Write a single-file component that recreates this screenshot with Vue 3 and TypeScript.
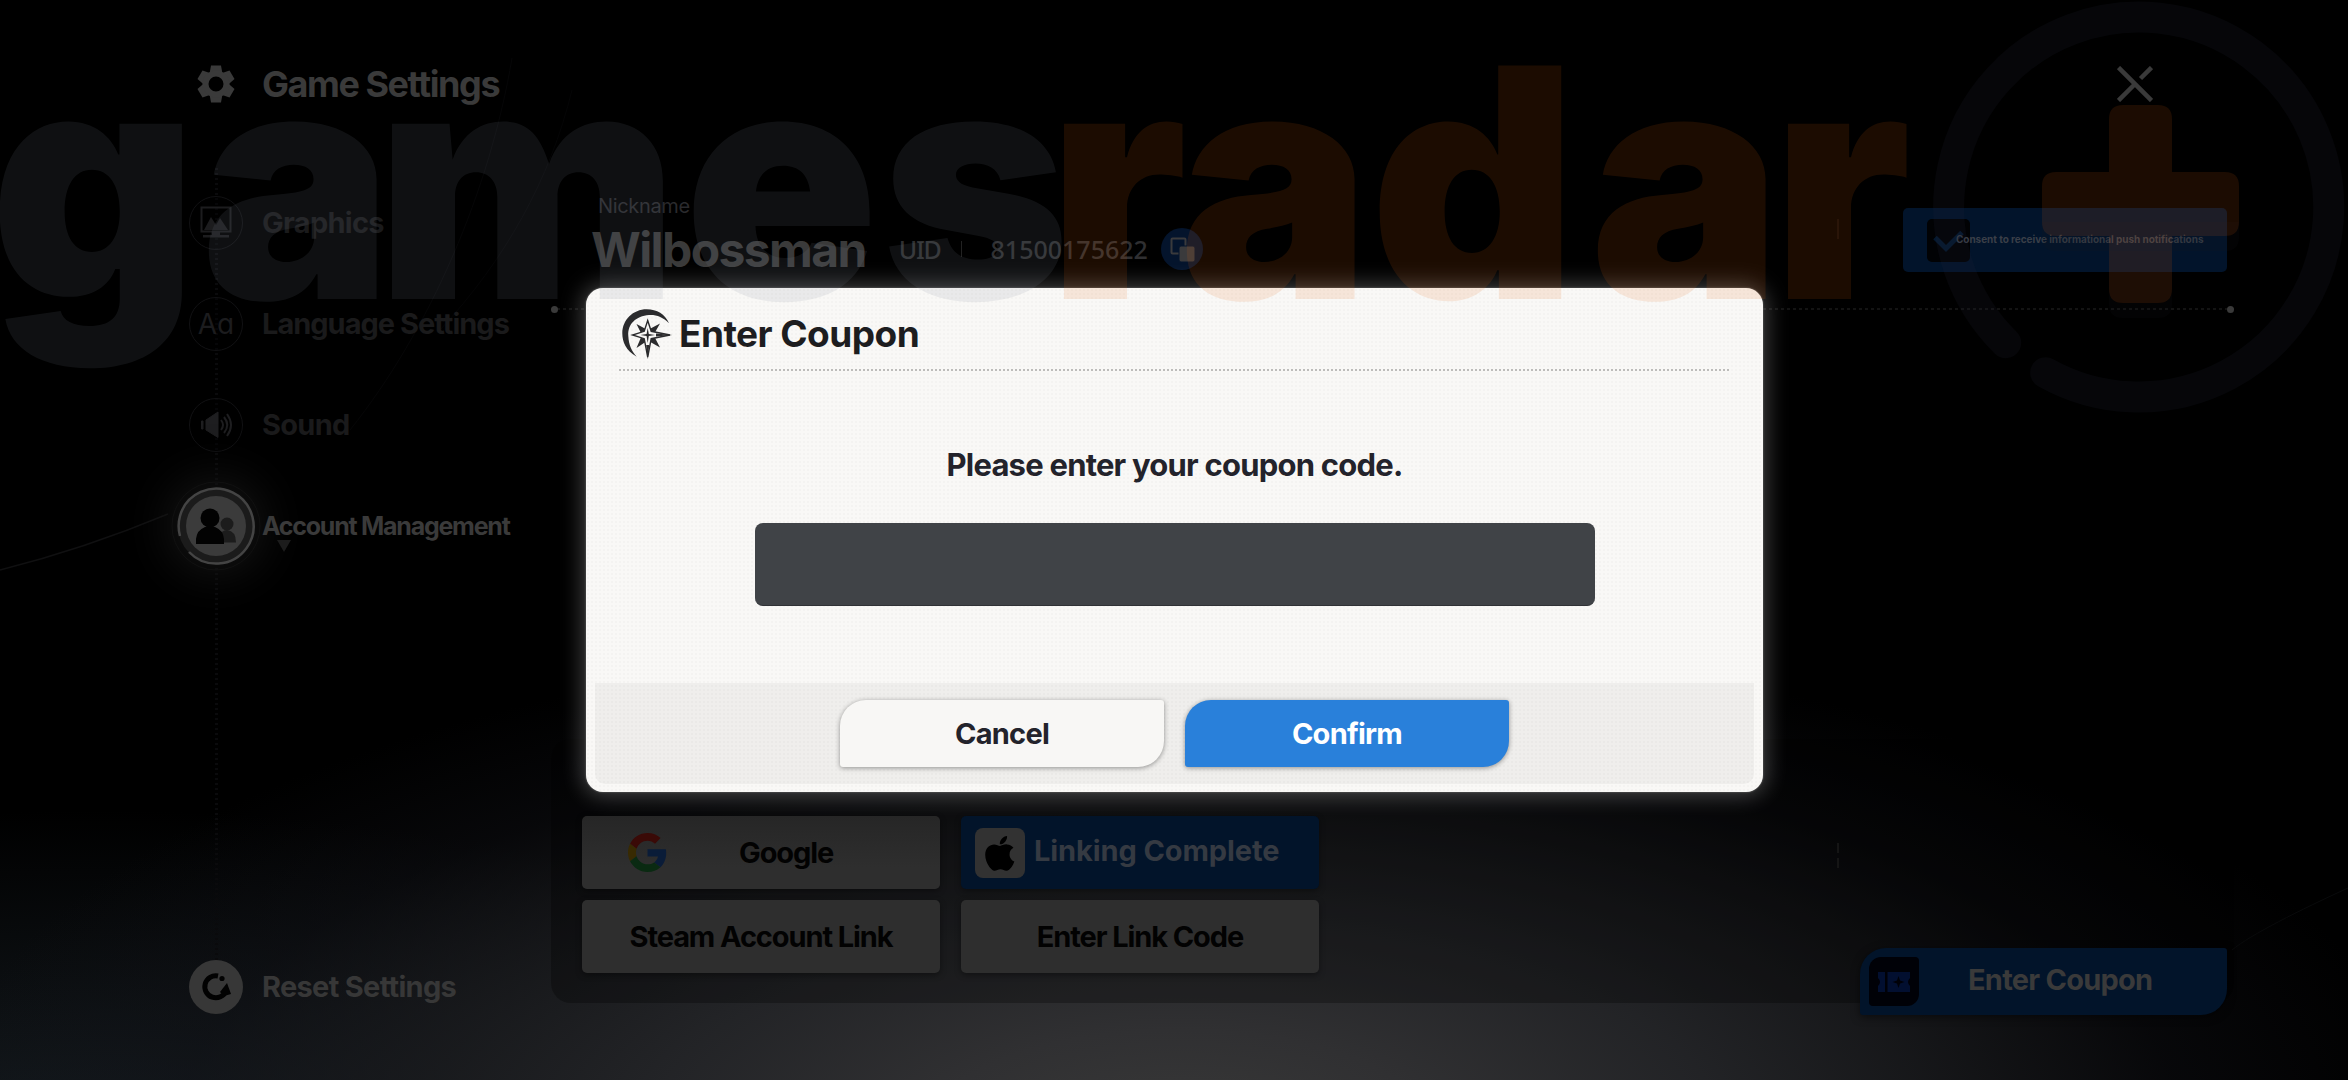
<template>
  <div class="screen">
    <svg class="trails" viewBox="0 0 2348 1080" fill="none">
      <path d="M0 570C60 555 120 534 168 514" stroke="#101011" stroke-width="1.5" />
      <path d="M512 58C490 190 430 330 350 430" stroke="#060607" />
      <path d="M572 90C550 180 505 260 440 330" stroke="#050506" />
      <path d="M2348 888C2300 910 2250 935 2232 950" stroke="#090a0b" />
    </svg>

    <aside class="sidebar">
      <div class="side-row title-row">
        <svg class="side-icon" viewBox="-27 -27 54 54">
          <g fill="#3a3a3a">
            <path v-for="a in 6" :key="a" d="M-5-18.5H5L6.500-10H-6.500Z" :transform="`rotate(${a * 60})`" />
          </g>
          <circle r="10.500" fill="none" stroke="#3a3a3a" stroke-width="6" />
        </svg>
        <h1 class="t-title">Game Settings</h1>
      </div>

      <nav class="side-nav">
        <div v-for="item in navItems" :key="item.id" class="side-row" :class="{ active: item.id === current }">
          <svg class="side-icon" viewBox="-27 -27 54 54">
            <circle v-if="item.id !== current" r="26.500" fill="#000" fill-opacity=".3" stroke="#111113" />
            <g v-if="item.id === 'graphics'">
              <rect x="-14.500" y="-15.500" width="29" height="24" fill="none" stroke="#1c1c1e" stroke-width="2" />
              <path d="M-12 7L-5-6L0 2L4-5L12 7Z" fill="#1c1c1e" />
              <path d="M-4 9H4V12H13V14.500H-13V12H-4Z" fill="#1c1c1e" />
            </g>
            <text v-else-if="item.id === 'language'" class="aa" x="0" y="10" text-anchor="middle">Aa</text>
            <g v-else-if="item.id === 'sound'" fill="none" stroke="#1e1e20" stroke-width="2">
              <path d="M-14.500-4H-13V4H-14.500ZM-10-5L2-13V12.500L-10 5Z" fill="#1e1e20" stroke-width="1" />
              <path d="M5-5Q9 0 5 5M8-8Q14.500 0 8 8M11-11Q19 0 11 11" />
            </g>
            <g v-else>
              <circle r="44" fill="none" stroke="#111" />
              <circle r="38" fill="#1b1b1b" />
              <circle r="30" fill="#3b3b3b" />
              <path d="M-27 26A37.500 37.500 0 1 0-36-10A37.500 37.500 0 0 0-36 10" fill="none" stroke="#444" stroke-width="2.500" />
              <g fill="#1c1c1c">
                <circle cx="11" cy="-2" r="6.500" />
                <path d="M4 16.500V11Q5 4 11 4Q20 5 20 16.500Z" />
              </g>
              <g fill="#020202">
                <circle cx="-6" cy="-8" r="9.500" />
                <path d="M-20 18V13Q-19 4-11 1H-1Q7 4 8 13V18Z" />
              </g>
            </g>
          </svg>
          <span class="t-nav" :class="'t-' + item.id">{{ item.label }}</span>
        </div>
      </nav>

      <div class="side-row reset-row">
        <svg class="side-icon" viewBox="-27 -27 54 54">
          <circle r="27" fill="#373737" />
          <path d="M2-11A11 11 0 1 0 10 4" fill="none" stroke="#020202" stroke-width="5" />
          <path d="M4 5L11-4L15 7L8 9Z" fill="#020202" />
          <circle cx="6" cy="-8.500" r="2.600" fill="#020202" />
        </svg>
        <span class="t-nav t-reset">Reset Settings</span>
      </div>
    </aside>

    <main class="content">
      <header class="top">
        <svg class="close" viewBox="0 0 36 36" fill="none" stroke="#3a3a3a" stroke-width="4.500">
          <path d="M1.500 1.500L34.500 34.500M1.500 34.500L18 18M23.500 12.500L34.500 1.500" />
        </svg>
      </header>

      <section class="profile">
        <div class="who">
          <div class="nick-label">Nickname</div>
          <div class="nick-row">
            <span class="nick">Wilbossman</span>
            <span class="uid uid-key">UID</span>
            <i class="uid-bar"></i>
            <span class="uid">81500175622</span>
            <svg class="copy" viewBox="0 0 42 42">
              <circle cx="21" cy="21" r="21" fill="#04142c" />
              <rect x="10.500" y="10.500" width="14" height="15" rx="1" fill="none" stroke="#3a3a3c" stroke-width="2" />
              <rect x="18" y="18" width="16" height="16" rx="2" fill="#3a3a3c" stroke="#04142c" />
            </svg>
          </div>
        </div>
        <i class="tick"></i>
        <button class="consent">
          <svg class="check" viewBox="0 0 43 43">
            <rect width="43" height="43" rx="5" fill="#010204" />
            <path d="M8 18.500L19 29.500L35 13.500" fill="none" stroke="#04182f" stroke-width="5" />
          </svg>
          <span class="consent-text">Consent to receive informational push notifications</span>
        </button>
      </section>

      <div class="divider"></div>

      <section class="panel">
        <div class="providers">
          <button v-for="p in providers" :key="p.id" class="provider" :class="p.id">
            <svg v-if="p.id === 'google'" class="g-logo" viewBox="0 0 48 48">
              <path fill="#3a0a07" d="M24 9.500c3.540 0 6.710 1.220 9.210 3.600l6.850-6.850C35.900 2.380 30.470 0 24 0 14.620 0 6.510 5.380 2.560 13.220l7.980 6.190C12.430 13.720 17.740 9.500 24 9.500z" />
              <path fill="#0a1c38" d="M46.980 24.550c0-1.570-.15-3.090-.38-4.550H24v9.020h12.940c-.58 2.960-2.260 5.480-4.780 7.180l7.730 6c4.510-4.180 7.090-10.360 7.090-17.650z" />
              <path fill="#382a02" d="M10.530 28.590c-.48-1.450-.76-2.990-.76-4.590s.27-3.140.76-4.590l-7.980-6.190C.92 16.460 0 20.120 0 24c0 3.880.92 7.540 2.560 10.780l7.970-6.190z" />
              <path fill="#0a2a12" d="M24 48c6.480 0 11.930-2.130 15.890-5.810l-7.730-6c-2.150 1.450-4.920 2.300-8.160 2.300-6.260 0-11.570-4.220-13.470-9.910l-7.980 6.190C6.510 42.620 14.620 48 24 48z" />
            </svg>
            <svg v-if="p.id === 'apple'" class="apple-logo" viewBox="0 0 50 50">
              <rect width="50" height="50" rx="8" fill="#323232" />
              <g transform="translate(9.900 2.500) scale(.086)">
                <path d="M318.700 268.700c-.2-36.700 16.400-64.400 50-84.800-18.800-26.900-47.200-41.700-84.700-44.600-35.500-2.800-74.300 20.700-88.500 20.700-15 0-49.400-19.700-76.400-19.700C63.300 141.200 4 184.800 4 273.500q0 39.300 14.400 81.200c12.800 36.700 59 126.700 107.200 125.200 25.200-.6 43-17.900 75.800-17.900 31.800 0 48.300 17.900 76.400 17.900 48.600-.7 90.400-82.500 102.600-119.300-65.200-30.700-61.700-90-61.700-91.900zm-56.600-164.200c27.300-32.400 24.800-61.900 24-72.500-24.100 1.400-52 16.400-67.900 34.900-17.500 19.800-27.800 44.300-25.600 71.900 26.100 2 49.900-11.400 69.500-34.300z" transform="translate(0 36) scale(.9)" />
              </g>
            </svg>
            <span>{{ p.label }}</span>
          </button>
        </div>
        <div class="ticks"><i></i><i></i></div>
        <button class="coupon">
          <span class="ticket">
            <svg viewBox="0 0 32 22">
              <path d="M0 1H7V21H0V15Q4 11 0 7ZM9.500 1H32V7Q28 11 32 15V21H9.500Z" fill="#020f30" />
              <path d="M20.500 5L22 9.500L26.500 11L22 12.500L20.500 17L19 12.500L14.500 11L19 9.500Z" fill="#000107" />
            </svg>
          </span>
          <span class="coupon-label">Enter Coupon</span>
        </button>
      </section>
    </main>

    <div class="modal">
      <header class="modal-head">
        <svg class="emblem" viewBox="0 0 51 51">
          <path fill="#2b2b2d" d="M14.700 47.700C4 42 .3 33 .3 24.300C.3 11 11 .3 24.700 .3C35 .3 43 5 47 14.300C41 8 34 5.500 27 6C14 7 5.500 15 6.300 27C6.800 36 9.500 42 14.700 47.700Z" />
          <path fill="#2b2b2d" d="M14.500 15L25.700 21L38 14.500L31.500 26L38 38.500L25.700 31.500L14.500 39L20 26Z" />
          <path fill="#f8f7f5" stroke="#2b2b2d" stroke-width="1.400" d="M25.700 11.500L29.200 22.300L48 26L29.200 29.700L25.700 48L22.200 29.700L10.500 26L22.200 22.300Z" />
          <path fill="#2b2b2d" d="M25.700 19L26.800 24.900L33 26L26.800 27.100L25.700 34L24.600 27.100L18.500 26L24.600 24.900ZM34 24.500L50.500 26L34 27.500ZM24.200 36L25.700 50.500L27.200 36Z" />
        </svg>
        <h2 class="modal-title">Enter Coupon</h2>
      </header>
      <div class="modal-body">
        <p class="prompt">Please enter your coupon code.</p>
        <input v-model="couponCode" class="code-input" type="text" />
      </div>
      <footer class="modal-foot">
        <button class="btn cancel">Cancel</button>
        <button class="btn confirm">Confirm</button>
      </footer>
    </div>

    <svg class="watermark" viewBox="0 0 2348 1080">
      <g class="wm-text">
        <text x="-10 201 376 684 881" y="299" fill="#7d8796">games</text>
        <text x="1048 1179 1370 1590 1772" y="299" fill="#e6640f">radar</text>
      </g>
      <g class="wm-shadow">
        <path d="M2005.700 342.700A190 190 0 1 1 2045.700 372.700" fill="none" stroke="#25283a" stroke-width="31" stroke-linecap="round" />
        <path d="M2109 236H2172V304Q2172 318 2158 318H2123Q2109 318 2109 304ZM2042 222V237Q2042 251 2056 251H2225Q2239 251 2239 237V222Z" fill="#15161c" />
      </g>
      <path class="wm-plus" d="M2123 105H2158Q2172 105 2172 119V172H2225Q2239 172 2239 186V222Q2239 236 2225 236H2172V289Q2172 303 2158 303H2123Q2109 303 2109 289V236H2056Q2042 236 2042 222V186Q2042 172 2056 172H2109V119Q2109 105 2123 105Z" fill="#e6640f" />
    </svg>
  </div>
</template>

<script setup lang="ts">
import { ref } from 'vue';

interface Entry {
  id: string;
  label: string;
}

const navItems: Entry[] = [
  { id: 'graphics', label: 'Graphics' },
  { id: 'language', label: 'Language Settings' },
  { id: 'sound', label: 'Sound' },
  { id: 'account', label: 'Account Management' },
];

const providers: Entry[] = [
  { id: 'google', label: 'Google' },
  { id: 'apple', label: 'Linking Complete' },
  { id: 'steam', label: 'Steam Account Link' },
  { id: 'code', label: 'Enter Link Code' },
];

const current = ref('account');
const couponCode = ref('');
</script>

<style>
body {
  margin: 0;
  background: #000;
}
</style>

<style scoped>
.screen {
  position: relative;
  width: 2348px;
  height: 1080px;
  overflow: hidden;
  display: grid;
  grid-template-columns: 551px 1683px 1fr;
  font-family: Inter, "Liberation Sans", sans-serif;
  background:
    radial-gradient(ellipse 1250px 500px at 1180px 1130px, #383838 0%, rgba(48, 48, 50, 1) 20%, rgba(36, 37, 40, 0.95) 43%, rgba(28, 29, 32, 0.8) 60%, rgba(18, 19, 24, 0.4) 80%, transparent 100%),
    radial-gradient(ellipse 900px 340px at 100px 1150px, #161c21 0%, transparent 100%),
    #000;
}

.trails,
.watermark {
  position: absolute;
  inset: 0;
  width: 2348px;
  height: 1080px;
  pointer-events: none;
}

button {
  border: none;
  padding: 0;
  font-family: inherit;
  font-weight: 700;
}

.sidebar {
  position: relative;
  height: 1080px;
  box-sizing: border-box;
  padding: 57px 0 66px 189px;
  display: flex;
  flex-direction: column;
}

.sidebar::before {
  content: "";
  position: absolute;
  left: 215px;
  top: 168px;
  width: 3px;
  height: 792px;
  background: repeating-linear-gradient(#0a0a0c 0 2px, transparent 2px 5px);
}

.side-row {
  position: relative;
  height: 54px;
  display: flex;
  align-items: center;
  gap: 19px;
  white-space: nowrap;
}

.side-icon {
  width: 54px;
  height: 54px;
  overflow: visible;
}

.side-nav {
  margin-top: 85px;
  display: flex;
  flex-direction: column;
  gap: 47px;
}

.active .side-icon {
  border-radius: 50%;
  box-shadow: 0 0 50px 18px #181818;
}

.active::after {
  content: "";
  position: absolute;
  left: 88px;
  top: 41px;
  border: 7px solid transparent;
  border-top: 12px solid #1c1c1c;
  border-bottom: none;
}

.t-title {
  margin: 0;
  font-size: 36px;
  font-weight: 700;
  letter-spacing: -1.45px;
  color: #3a3a3a;
}

.t-nav {
  padding-bottom: 1px;
  font-size: 29px;
  font-weight: 700;
  letter-spacing: -0.7px;
  color: #1a1a1b;
}

.t-language {
  letter-spacing: -1px;
}

.t-account {
  font-size: 25px;
  letter-spacing: -1.25px;
  color: #3a3a3a;
}

.t-reset {
  color: #373737;
}

.aa {
  font-size: 28px;
  font-feature-settings: "cv11";
  fill: #1c1c1e;
}

.reset-row {
  margin-top: auto;
}

.content {
  height: 1080px;
  display: flex;
  flex-direction: column;
}

.top {
  height: 111px;
  display: flex;
  justify-content: flex-end;
  align-items: center;
}

.close {
  width: 36px;
  height: 36px;
  margin: 57px 81px 0 0;
}

.profile {
  height: 197px;
  display: flex;
  align-items: flex-start;
  padding: 0 7px 0 40px;
}

.who {
  padding-top: 82px;
  flex: 1;
}

.nick-label {
  padding-left: 7px;
  font-size: 20px;
  line-height: 26px;
  letter-spacing: -0.35px;
  color: #2a2a2d;
}

.nick-row {
  display: flex;
  align-items: center;
  height: 60px;
}

.nick {
  font-size: 48px;
  font-weight: 700;
  letter-spacing: -1.6px;
  color: #3a3a3a;
  margin-right: 33px;
}

.uid {
  font-family: "Noto Sans", sans-serif;
  font-size: 25px;
  font-weight: 500;
  color: #2f2f31;
}

.uid-key {
  letter-spacing: -1.3px;
}

.uid-bar {
  width: 1px;
  height: 16px;
  margin: 0 29px 0 20px;
  background: #222;
}

.copy {
  width: 42px;
  height: 42px;
  margin-left: 13px;
}

.tick {
  width: 2px;
  height: 20px;
  margin: 108px 64px 0 0;
  background: #100a08;
}

.consent {
  width: 324px;
  height: 64px;
  margin-top: 97px;
  border-radius: 5px;
  background: #02142b;
  display: flex;
  align-items: center;
  padding-left: 24px;
}

.check {
  width: 43px;
  height: 43px;
  flex: none;
}

.consent-text {
  font-size: 10px;
  font-weight: 700;
  color: #3a3f48;
  white-space: nowrap;
  letter-spacing: -0.05px;
  margin: 0 0 2px -14px;
}

.divider {
  height: 2px;
  background: repeating-linear-gradient(90deg, #131313 0 3px, transparent 3px 6px);
  display: flex;
  justify-content: space-between;
  align-items: center;
}

.divider::before,
.divider::after {
  content: "";
  width: 7px;
  height: 7px;
  border-radius: 50%;
  background: #3a3a3a;
}

.panel {
  box-sizing: border-box;
  height: 264px;
  margin-top: 429px;
  padding: 77px 7px 0 31px;
  border-radius: 20px;
  background: rgba(0, 0, 0, 0.28);
  display: flex;
}

.providers {
  display: grid;
  grid-template-columns: 358px 358px;
  grid-template-rows: 73px 73px;
  gap: 11px 21px;
}

.provider {
  border-radius: 5px;
  background: #2e2e2e;
  box-shadow: 0 2px 6px rgba(0, 0, 0, 0.4);
  color: #020202;
  font-size: 29px;
  letter-spacing: -1.1px;
  display: flex;
  align-items: center;
  justify-content: center;
}

.google {
  background: linear-gradient(#262626, #2e2e2e 70%);
  justify-content: flex-start;
  padding-left: 46px;
}

.g-logo {
  width: 39px;
  height: 39px;
  margin-right: 72px;
}

.apple {
  background: #02142a;
  color: #353a42;
  letter-spacing: -0.1px;
  justify-content: flex-start;
  align-items: flex-start;
  padding: 12px 0 0 14px;
}

.apple span {
  line-height: 45px;
}

.apple-logo {
  width: 50px;
  height: 50px;
  margin-right: 9px;
}

.ticks {
  margin: 27px auto 0 518px;
  display: flex;
  flex-direction: column;
  gap: 5px;
}

.ticks i {
  width: 2px;
  height: 10px;
  background: #151515;
}

.coupon {
  align-self: flex-end;
  flex: none;
  width: 367px;
  height: 67px;
  margin-bottom: -12px;
  padding-left: 9px;
  border-radius: 26px 3px 26px 3px;
  background: #02142a;
  box-shadow: 0 2px 8px rgba(0, 0, 0, 0.5);
  color: #3a3a3a;
  display: flex;
  align-items: center;
}

.ticket {
  width: 50px;
  height: 49px;
  border-radius: 12px 4px 12px 4px;
  background: #000107;
  display: flex;
  align-items: center;
  justify-content: center;
}

.ticket svg {
  width: 32px;
  height: 22px;
}

.coupon-label {
  margin-left: 49px;
  padding-bottom: 4px;
  font-size: 29px;
  letter-spacing: -0.75px;
}

.modal {
  position: absolute;
  left: 586px;
  top: 288px;
  width: 1177px;
  height: 504px;
  box-sizing: border-box;
  padding: 0 9px 8px;
  border-radius: 17px;
  background:
    radial-gradient(circle at 2px 2px, rgba(0, 0, 0, 0.018) 1px, transparent 1.5px) 0 0 / 4px 4px,
    #f9f8f6;
  box-shadow: 0 0 2px 0 #777, 0 0 22px 3px rgba(255, 255, 255, 0.27);
  display: flex;
  flex-direction: column;
}

.modal-head {
  height: 81px;
  margin: 0 25px 0 24px;
  padding: 0 0 0 3px;
  display: flex;
  align-items: center;
  gap: 6px;
  border-bottom: 2px dotted #bdbcba;
}

.emblem {
  width: 51px;
  height: 51px;
  margin-top: 12px;
}

.modal-title {
  margin: 9px 0 0;
  font-size: 37px;
  font-weight: 700;
  letter-spacing: -0.55px;
  color: #1d1d1f;
}

.modal-body {
  flex: 1;
  display: flex;
  flex-direction: column;
  align-items: center;
}

.prompt {
  margin: 74px 0 0;
  font-size: 31px;
  line-height: 40px;
  font-weight: 700;
  letter-spacing: -0.78px;
  color: #23232b;
}

.code-input {
  box-sizing: border-box;
  width: 840px;
  height: 83px;
  margin-top: 38px;
  border: none;
  border-bottom: 1px solid #303236;
  border-radius: 8px;
  background: #404347;
  color: #fff;
  font-size: 30px;
  padding: 0 24px;
}

.modal-foot {
  height: 101px;
  border-radius: 0 0 10px 10px;
  background: rgba(0, 0, 0, 0.04);
  display: flex;
  justify-content: center;
  align-items: center;
  gap: 21px;
}

.btn {
  width: 324px;
  height: 67px;
  border-radius: 26px 3px 26px 3px;
  box-shadow: 0 1px 5px rgba(0, 0, 0, 0.4);
  font-size: 29px;
  letter-spacing: -0.75px;
}

.cancel {
  background: #f8f7f5;
  color: #23232b;
}

.confirm {
  background: #2980da;
  color: #fff;
}

.wm-text,
.wm-plus {
  opacity: 0.12;
}

.wm-text text {
  font-family: Inter, sans-serif;
  font-weight: 900;
  font-size: 321px;
}

.wm-shadow {
  opacity: 0.16;
}
</style>
